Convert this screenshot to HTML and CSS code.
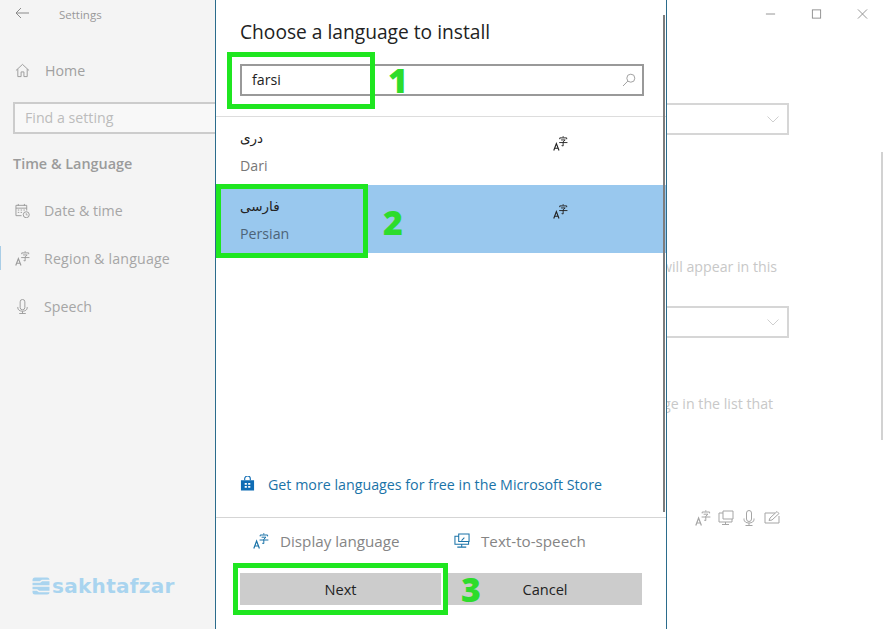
FILE: index.html
```html
<!DOCTYPE html>
<html lang="en">
<head>
<meta charset="utf-8">
<title>Settings</title>
<link rel="stylesheet" href="styles.css">
</head>
<body>
<svg class="defs" width="0" height="0" aria-hidden="true">
  <symbol id="lang" viewBox="0 0 16 16">
    <path d="M.8 15.5 3.6 8 6.4 15.5M1.7 13H5.5" fill="none" stroke="currentColor" stroke-width="1.2"/>
    <path d="M10.8.2V1.6M7.2 3.4V2H14.6V3.4M8.6 4.2H13L10.8 6.2M6.6 7H15.4M10.8 6.2V10.6L9.2 10.2" fill="none" stroke="currentColor" stroke-width="1"/>
  </symbol>
</svg>
<div class="app">
  <aside class="sidebar">
    <div class="titlebar">
      <svg class="back" viewBox="0 0 14 12"><path d="M6 1 1 6 6 11M1 6H14" fill="none" stroke="currentColor" stroke-width="1"/></svg>
      <span class="apptitle">Settings</span>
    </div>
    <div class="navhome">
      <svg class="navicon" viewBox="0 0 16 16"><path d="M1 8 8 1.5 15 8M3 6.5V14.5H6.5V9.5H9.5V14.5H13V6.5" fill="none" stroke="currentColor" stroke-width="1"/></svg>
      <span>Home</span>
    </div>
    <div class="find">Find a setting</div>
    <div class="section">Time &amp; Language</div>
    <nav class="nav">
      <div class="navitem">
        <svg class="navicon" viewBox="0 0 16 16"><path d="M1 2.5H12.5V8M7 13.5H1V2.5M1 5.5H12.5M3.5 1V3M10 1V3M3 7.5H4.5M6 7.5H7.5M9 7.5H10.5M3 10H4.5M6 10H7.5" fill="none" stroke="currentColor" stroke-width="1"/><circle cx="12" cy="12.5" r="3.2" fill="none" stroke="currentColor"/><path d="M12 10.8V12.7H13.5" fill="none" stroke="currentColor" stroke-width=".8"/></svg>
        <span>Date &amp; time</span>
      </div>
      <div class="navitem current">
        <svg class="navicon"><use href="#lang"/></svg>
        <span>Region &amp; language</span>
      </div>
      <div class="navitem">
        <svg class="navicon" viewBox="0 0 16 16"><path d="M5.5 3a2.5 2.5 0 0 1 5 0V9a2.5 2.5 0 0 1-5 0ZM3 8.5V9.5C3 11.5 5 13 8 13S13 11.5 13 9.5V8.5M8 13V15.5M4.5 15.5H11.5" fill="none" stroke="currentColor" stroke-width="1"/></svg>
        <span>Speech</span>
      </div>
    </nav>
    <div class="brand">
      <svg class="brandicon" viewBox="0 0 18 18"><rect x=".5" y=".5" width="17" height="17" rx="2.5" fill="#a9d4ef"/><path d="M0 5H8L10 3.5H18M0 9H18M0 13H5L7 14.5H18" fill="none" stroke="#f4f4f4" stroke-width="1.3"/></svg>
      <span class="brandname">sakhtafzar</span>
    </div>
  </aside>

  <section class="dialog">
    <h1 class="dtitle">Choose a language to install</h1>
    <div class="search">
      <span>farsi</span>
      <svg class="searchicon" viewBox="0 0 14 14"><circle cx="8.8" cy="5.2" r="4" fill="none" stroke="currentColor"/><path d="M5.9 8 1 13" fill="none" stroke="currentColor"/></svg>
    </div>
    <div class="list">
      <div class="lang">
        <div class="names"><div class="native">دری</div><div class="english">Dari</div></div>
        <svg class="langicon"><use href="#lang"/></svg>
      </div>
      <div class="lang selected">
        <div class="names"><div class="native">فارسی</div><div class="english">Persian</div></div>
        <svg class="langicon"><use href="#lang"/></svg>
      </div>
    </div>
    <a class="store">
      <svg class="storeicon" viewBox="0 0 16 16"><path d="M5 4V2.5a3 3 0 0 1 6 0V4" fill="none" stroke="currentColor" stroke-width="1.2"/><path d="M1 4H15V15H1ZM5 7V8.8H7.3V7ZM8.7 7V8.8H11V7ZM5 10.2V12H7.3V10.2ZM8.7 10.2V12H11V10.2Z" fill="currentColor" fill-rule="evenodd"/></svg>
      <span>Get more languages for free in the Microsoft Store</span>
    </a>
    <div class="features">
      <div class="feature">
        <svg class="featicon"><use href="#lang"/></svg>
        <span>Display language</span>
      </div>
      <div class="feature">
        <svg class="featicon" viewBox="0 0 17 17"><path d="M5 3.5H1V12H15.5V9M5 1H16V9H5ZM3.5 15H13M8.2 12V15M8 8 11 5" fill="none" stroke="currentColor" stroke-width="1.1"/></svg>
        <span>Text-to-speech</span>
      </div>
    </div>
    <div class="buttons">
      <button class="btn">Next</button>
      <button class="btn">Cancel</button>
    </div>
    <div class="dscroll"></div>
    <div class="mark box1"></div>
    <div class="mark box2"></div>
    <div class="mark box3"></div>
    <div class="num num1">1</div>
    <div class="num num2">2</div>
    <div class="num num3">3</div>
  </section>

  <main class="pane">
    <div class="winctl">
      <svg class="ctl" viewBox="0 0 12 12"><path d="M1 6H11" stroke="currentColor"/></svg>
      <svg class="ctl" viewBox="0 0 12 12"><rect x="1.5" y="1.5" width="9" height="9" fill="none" stroke="currentColor"/></svg>
      <svg class="ctl" viewBox="0 0 12 12"><path d="M1 1 11 11M11 1 1 11" stroke="currentColor"/></svg>
    </div>
    <div class="select s1"><svg class="chev" viewBox="0 0 12 7"><path d="M.5.5 6 6 11.5.5" fill="none" stroke="currentColor"/></svg></div>
    <p class="clip p1">will appear in this</p>
    <div class="select s2"><svg class="chev" viewBox="0 0 12 7"><path d="M.5.5 6 6 11.5.5" fill="none" stroke="currentColor"/></svg></div>
    <p class="clip p2">ge in the list that</p>
    <div class="caps">
      <svg class="cap"><use href="#lang"/></svg>
      <svg class="cap" viewBox="0 0 16 16"><path d="M5 3H1V12H14V9M5 1H15V9H5ZM4 14.5H11M7.5 12V14.5" fill="none" stroke="currentColor"/></svg>
      <svg class="cap" viewBox="0 0 16 16"><path d="M5.5 3a2.5 2.5 0 0 1 5 0V9a2.5 2.5 0 0 1-5 0ZM3 8.5V9.5C3 11.5 5 13 8 13S13 11.5 13 9.5V8.5M8 13V15.5M4.5 15.5H11.5" fill="none" stroke="currentColor"/></svg>
      <svg class="cap" viewBox="0 0 16 16"><path d="M11 3H1V13H15V6M5 10.5 6 8 13 1.5 15 3.5 8 10Z" fill="none" stroke="currentColor"/></svg>
    </div>
    <div class="pscroll"></div>
  </main>
</div>
</body>
</html>
```
FILE: styles.css
```css
* { box-sizing: border-box; }
html, body { margin: 0; height: 100%; overflow: hidden; background: #fff; }
body { font-family: "Open Sans", "Noto Sans", sans-serif; color: #222; }
.defs { position: absolute; }
.app { display: flex; width: 883px; height: 629px; }

/* Sidebar */
.sidebar { width: 215px; flex: none; background: #f4f4f4; color: #999; position: relative; display: flex; flex-direction: column; }
.titlebar { height: 28px; display: flex; align-items: center; padding-left: 15px; }
.back { width: 14px; height: 12px; color: #8a8a8a; margin-top: -2px; }
.apptitle { margin-left: 30px; font-size: 11.5px; color: #999; }
.navhome { display: flex; align-items: center; gap: 15px; height: 28px; margin-top: 28px; padding-left: 15px; font-size: 14.2px; color: #a0a0a0; }
.navicon { width: 15px; height: 15px; flex: none; color: #9a9a9a; }
.find { height: 32px; margin: 18px 0 0 13px; border: 2px solid #ccc; border-right: 0; background: #f8f8f8; padding-left: 10px; line-height: 27px; font-size: 14.2px; color: #bcbcbc; }
.section { margin: 19px 0 0 13px; font-size: 14.4px; font-weight: 600; line-height: 22px; color: #9b9b9b; }
.nav { margin-top: 11px; }
.navitem { display: flex; align-items: center; gap: 14px; height: 48px; padding-left: 15px; font-size: 14.2px; color: #a6a6a6; position: relative; }
.navitem.current { letter-spacing: .17px; }
.navitem.current::before { content: ""; position: absolute; left: 0; top: 12px; width: 1px; height: 24px; background: #a9cde6; }
.brand { position: absolute; left: 32px; top: 575px; display: flex; align-items: center; gap: 2px; }
.brandicon { width: 18px; height: 20px; }
.brandname { font-family: "DejaVu Sans", sans-serif; font-weight: 700; font-size: 20px; line-height: 22px; letter-spacing: .3px; color: #a9d4ef; }

/* Dialog */
.dialog { width: 452px; flex: none; position: relative; z-index: 1; background: #fff; border-left: 1px solid #2b6c8c; border-right: 1px solid #2b6c8c; display: flex; flex-direction: column; }
.dtitle { margin: 19px 0 0 24px; font-size: 19.2px; line-height: 26px; font-weight: 400; color: #222; }
.search { display: flex; align-items: center; justify-content: space-between; height: 32px; margin: 19px 22px 0 24px; padding: 0 6px 2px 10px; border: 2px solid #999; font-size: 14.2px; color: #222; }
.searchicon { width: 14px; height: 14px; color: #a2a2a2; margin-top: 2px; }
.list { margin-top: 20px; border-top: 1px solid #ddd; flex: 1; }
.lang { display: flex; align-items: center; height: 68px; padding-left: 24px; }
.lang.selected { background: #99c8ee; }
.names { width: 313px; }
.native { font-family: "DejaVu Sans", sans-serif; font-size: 13.5px; line-height: 24px; color: #222; height: 29px; padding-top: 2px; }
.english { font-size: 14.2px; line-height: 26px; color: #777; }
.selected .english { color: #4d6478; }
.langicon { width: 15px; height: 15px; color: #222; margin-top: -16px; }
.store { display: flex; align-items: center; gap: 13px; height: 24px; padding-left: 24px; margin-bottom: 21px; font-size: 14.25px; color: #1a73a8; }
.storeicon { width: 15px; height: 16px; flex: none; color: #0f6cb4; }
.features { display: flex; height: 51px; border-top: 1px solid #d5d5d5; padding: 13px 0 0 37px; font-size: 15.2px; color: #858585; }
.feature { display: flex; align-items: center; gap: 11px; height: 20px; width: 201px; }
.featicon { width: 16px; height: 16px; flex: none; color: #1a73a8; }
.buttons { display: grid; grid-template-columns: 201px 194px; gap: 7px; height: 32px; margin: 5px 0 24px 24px; }
.btn { border: 0; padding: 0; background: #ccc; font: inherit; font-size: 14.6px; color: #222; }
.dscroll { position: absolute; right: 1px; top: 15px; width: 2px; height: 497px; background: #7d7d7d; }
.mark { position: absolute; border: 5px solid #1fe620; }
.box1 { left: 11px; top: 52px; width: 148px; height: 57px; }
.box2 { left: 0; top: 184px; width: 152px; height: 74px; }
.box3 { left: 17px; top: 563px; width: 215px; height: 52px; }
.num { position: absolute; font-family: "Open Sans", sans-serif; font-weight: 800; font-size: 34px; line-height: 40px; color: #2ddc2c; }
.num1 { left: 172px; top: 60px; }
.num2 { left: 167px; top: 202px; }
.num3 { left: 245px; top: 569px; }

/* Right pane */
.pane { flex: 1; position: relative; display: flex; flex-direction: column; color: #c5c5c5; }
.winctl { display: flex; gap: 35px; height: 30px; margin: 0; padding: 8px 0 0 98px; color: #8c8c8c; }
.ctl { width: 11px; height: 12px; flex: none; }
.select { display: flex; align-items: center; justify-content: flex-end; width: 122px; height: 32px; border: 2px solid #d6d6d6; border-left: 0; padding-right: 8px; color: #cfcfcf; }
.chev { width: 12px; height: 7px; }
.s1 { margin-top: 73px; }
.clip { margin: 0; font-size: 14.2px; line-height: 20px; white-space: nowrap; color: #c8c8c8; }
.p1 { margin: 122px 0 0 -6px; }
.s2 { margin-top: 29px; }
.p2 { margin: 56px 0 0 -4px; }
.caps { display: flex; gap: 7px; margin: 96px 0 0 28px; color: #a5a5a5; }
.cap { width: 16px; height: 16px; }
.pscroll { position: absolute; right: 0; top: 152px; width: 2px; height: 288px; background: #d2d2d2; }
```
